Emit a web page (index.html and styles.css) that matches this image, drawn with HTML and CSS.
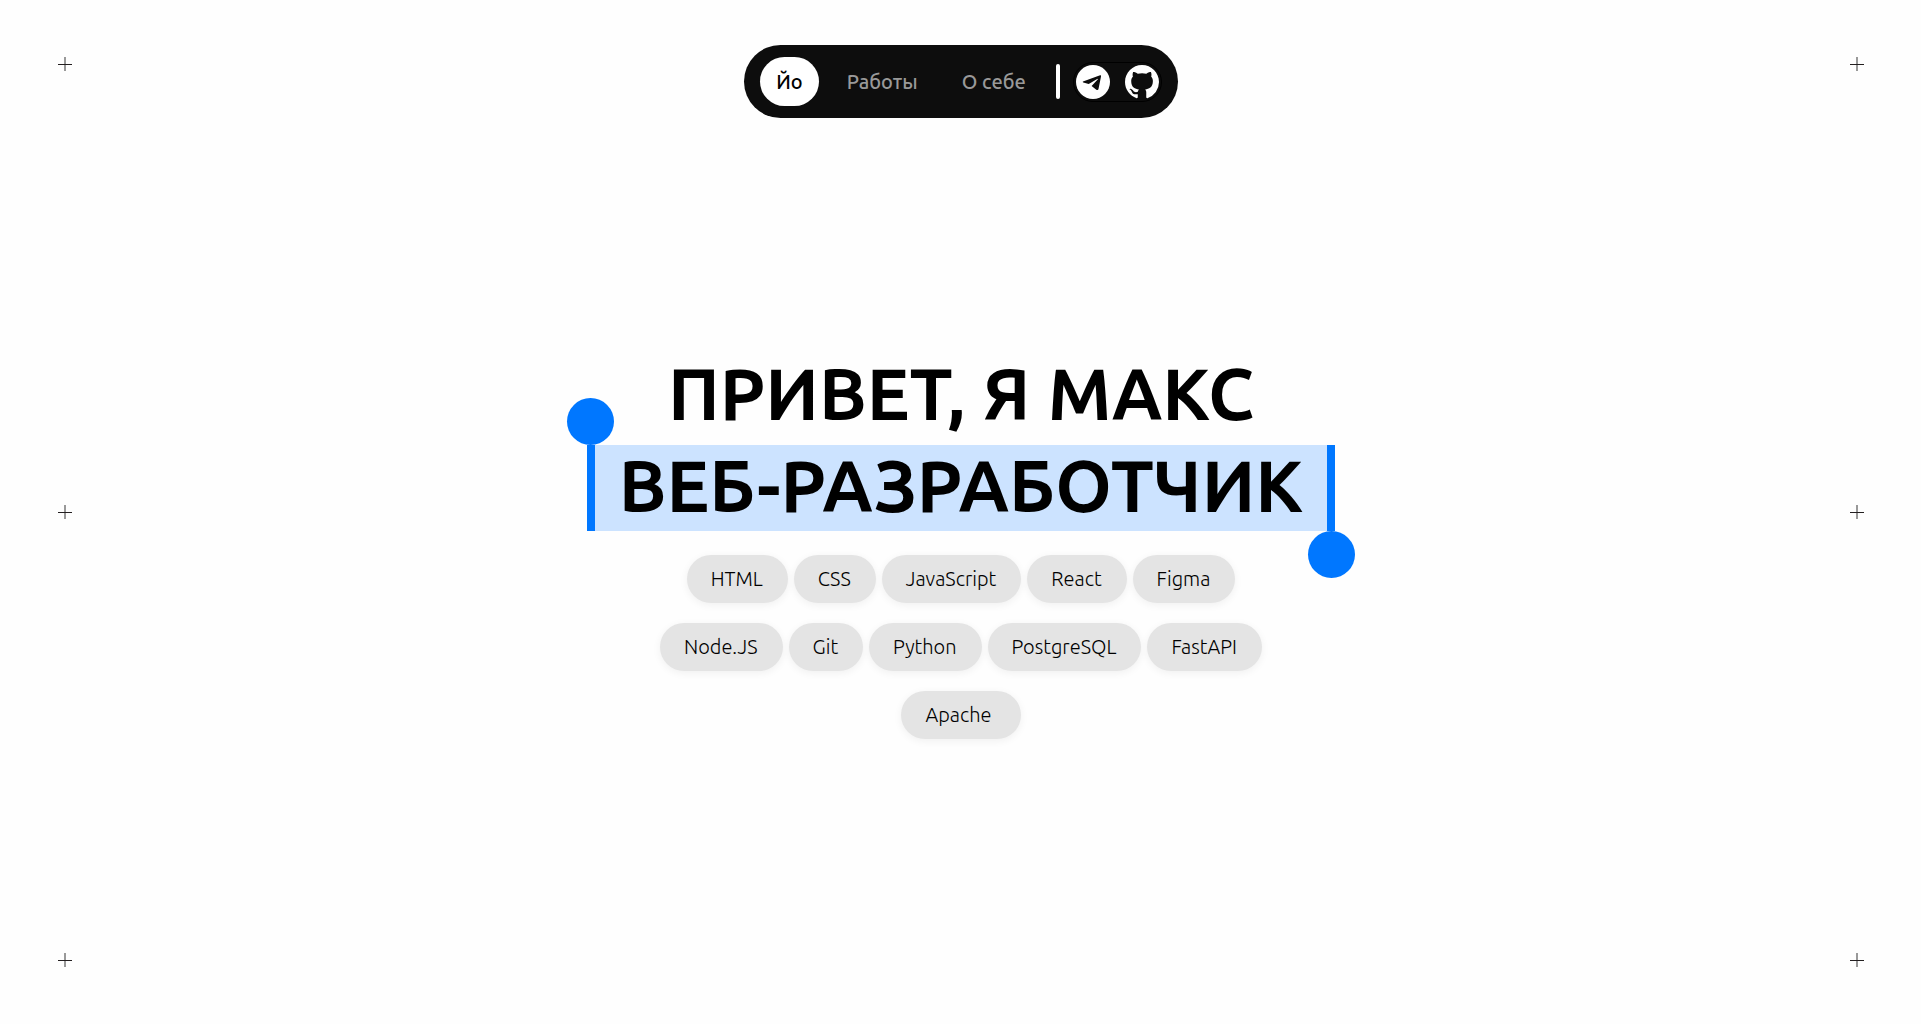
FILE: index.html
```html
<!DOCTYPE html>
<html lang="ru">
<head>
  <meta charset="utf-8">
  <meta name="viewport" content="width=device-width, initial-scale=1">
  <title>Макс — веб-разработчик</title>
  <link rel="stylesheet" href="styles.css">
</head>
<body>
  <div class="page">
    <div class="marks" aria-hidden="true">
      <span class="mark"></span><span class="mark"></span><span class="mark"></span>
    </div>
    <div class="content">
      <header class="nav">
        <nav class="nav-links">
          <a class="nav-link nav-link-active" href="#home">Йо</a>
          <a class="nav-link" href="#works">Работы</a>
          <a class="nav-link" href="#about">О себе</a>
        </nav>
        <span class="divider"></span>
        <div class="social">
          <a class="social-link" href="#telegram" aria-label="Telegram">
            <svg viewBox="0 0 34 34" width="34" height="34">
              <circle cx="17" cy="17" r="17" fill="#fff"/>
              <path fill="#0d0d0d" d="M7 16.6 24.1 10.2Q25.3 9.9 25 11.4L22.6 23.4Q22.2 25.8 20 24.4L15.6 21 21.9 14.3Q22 13.6 21.2 13.9L12.7 19.1 7.3 17.6Q6.2 17.1 7 16.6Z"/>
            </svg>
          </a>
          <a class="social-link" href="#github" aria-label="GitHub">
            <svg viewBox="0 0 16 16" width="34" height="34">
              <path fill="#fff" d="M8 0C3.58 0 0 3.58 0 8c0 3.54 2.29 6.53 5.47 7.59.4.07.55-.17.55-.38 0-.19-.01-.82-.01-1.49-2.01.37-2.53-.49-2.69-.94-.09-.23-.48-.94-.82-1.13-.28-.15-.68-.52-.01-.53.63-.01 1.08.58 1.23.82.72 1.21 1.87.87 2.33.66.07-.52.28-.87.51-1.07-1.78-.2-3.64-.89-3.64-3.95 0-.87.31-1.59.82-2.15-.08-.2-.36-1.02.08-2.12 0 0 .67-.21 2.2.82.64-.18 1.32-.27 2-.27s1.36.09 2 .27c1.53-1.04 2.2-.82 2.2-.82.44 1.1.16 1.92.08 2.12.51.56.82 1.27.82 2.15 0 3.07-1.87 3.75-3.65 3.95.29.25.54.73.54 1.48 0 1.07-.01 1.93-.01 2.2 0 .21.15.46.55.38A8.01 8.01 0 0 0 16 8c0-4.42-3.58-8-8-8Z"/>
            </svg>
          </a>
        </div>
      </header>
      <main class="hero">
        <h1 class="title">
          <span class="title-line">ПРИВЕТ, Я МАКС</span>
          <span class="title-line selection">ВЕБ-РАЗРАБОТЧИК</span>
        </h1>
        <ul class="skills">
          <li class="skill">HTML</li>
          <li class="skill">CSS</li>
          <li class="skill">JavaScript</li>
          <li class="skill">React</li>
          <li class="skill">Figma</li>
          <li class="skill">Node.JS</li>
          <li class="skill">Git</li>
          <li class="skill">Python</li>
          <li class="skill">PostgreSQL</li>
          <li class="skill">FastAPI</li>
          <li class="skill skill-last">Apache</li>
        </ul>
      </main>
    </div>
    <div class="marks" aria-hidden="true">
      <span class="mark"></span><span class="mark"></span><span class="mark"></span>
    </div>
  </div>
</body>
</html>
```

FILE: styles.css
```css
* {
  box-sizing: border-box;
}

body {
  margin: 0;
  background: #fefefe;
  color: #000;
  font-family: "Ubuntu", "Noto Sans", sans-serif;
}

.page {
  display: grid;
  grid-template-columns: auto 1fr auto;
  min-height: 100vh;
  padding: 0 57px 0 58px;
}

.marks {
  display: flex;
  flex-direction: column;
  justify-content: space-between;
  padding: 57px 0;
}

.mark {
  width: 14px;
  height: 14px;
  background:
    linear-gradient(#231f20, #231f20) center / 14px 1px no-repeat,
    linear-gradient(#999, #999) center / 2px 14px no-repeat;
}

.content {
  display: flex;
  flex-direction: column;
  align-items: center;
  padding: 45px 0 50px;
}

.nav {
  display: flex;
  align-items: center;
  height: 73px;
  padding: 0 16px;
  border-radius: 37px;
  background: #0d0d0d;
}

.nav-links {
  display: flex;
}

.nav-link {
  padding: 0 22px;
  border-radius: 25px;
  color: #999;
  font-size: 20px;
  font-weight: 500;
  line-height: 49px;
  text-decoration: none;
}

.nav-link-active {
  padding: 0 16px;
  margin-right: 6px;
  background: #fff;
  color: #000;
}

.divider {
  width: 4px;
  height: 35px;
  margin: 0 13px 0 8px;
  border-radius: 2px;
  background: #fff;
}

.social {
  display: flex;
  gap: 15px;
  padding: 2px;
  border: 1px solid #000;
  border-radius: 20px;
}

.social-link,
.social-link svg {
  display: block;
}

.hero {
  display: flex;
  flex: 1;
  flex-direction: column;
  align-items: center;
  justify-content: center;
  gap: 24px;
}

.title {
  display: flex;
  flex-direction: column;
  align-items: center;
  gap: 6px;
  margin: 0;
  font-size: 72px;
  font-weight: 600;
  line-height: 82px;
  white-space: nowrap;
}

.title-line {
  padding-bottom: 4px;
}

.selection {
  position: relative;
  padding: 0 24px 4px;
  border: solid #0077ff;
  border-width: 0 8px;
  background: #cce3ff;
}

.selection::before,
.selection::after {
  content: "";
  position: absolute;
  width: 47px;
  height: 47px;
  border-radius: 50%;
  background: #0077ff;
}

.selection::before {
  bottom: 100%;
  left: -28px;
}

.selection::after {
  top: 100%;
  right: -28px;
}

.skills {
  display: flex;
  flex-wrap: wrap;
  justify-content: center;
  gap: 20px 6px;
  max-width: 640px;
  margin: 0;
  padding: 0;
  list-style: none;
}

.skill {
  padding: 0 25px 0 24px;
  border-radius: 24px;
  background: #e4e4e4;
  box-shadow: 0 2px 8px rgba(0, 0, 0, 0.06);
  font-size: 20px;
  font-weight: 300;
  line-height: 48px;
}

.skill-last {
  padding-right: 29px;
}
```
